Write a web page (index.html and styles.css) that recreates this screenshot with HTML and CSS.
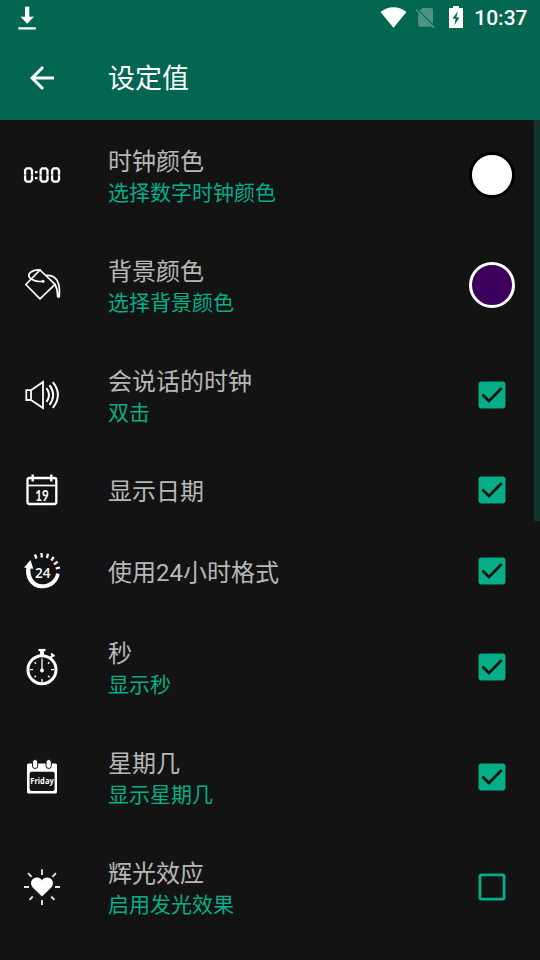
FILE: index.html
```html
<!DOCTYPE html>
<html lang="zh-CN">
<head>
<meta charset="utf-8">
<title>设定值</title>
<link rel="stylesheet" href="styles.css">
</head>
<body>
<header class="header">
  <div class="status">
    <svg class="download" width="20" height="24" viewBox="0 0 20 24"><path fill="#fff" d="M8 .8h4.300v10h4.700L10.200 17.800 3.500 10.800H8zM1.300 21.300h17.500v2.300H1.300z"/></svg>
    <div class="status-right">
      <svg width="27" height="36" viewBox="380 0 27 36"><path fill="#fff" d="M380.500 12Q386 7.200 393.500 7.200T406.500 12L393.500 27.700z"/></svg>
      <svg class="sim" width="20" height="36" viewBox="415 0 20 36"><path fill="#4f9383" d="M422.500 8h9q1.500 0 1.500 1.500V23.800L419.300 10.500zM418.200 12.700L432 26.700H420q-1.800 0-1.800-1.800z"/><path stroke="#4f9383" stroke-width="1.700" d="M416 9.500l18.300 18.300"/></svg>
      <svg class="battery" width="14" height="36" viewBox="449 0 14 36"><path fill="#fff" d="M449 8h4V6h6v2h4v20h-14z"/><path fill="#036650" d="M457.500 11.500l-5 7.300h3.200l-1.200 6.200 5-7.500h-3.200l1.500-6z"/></svg>
      <span class="time">10:37</span>
    </div>
  </div>
  <div class="toolbar">
    <svg class="back" width="36" height="36" viewBox="0 0 24 24"><path fill="#fff" d="M20 11H7.830l5.590-5.590L12 4l-8 8 8 8 1.410-1.410L7.830 13H20v-2z"/></svg>
    <h1>设定值</h1>
  </div>
</header>

<main class="list">
  <section class="row">
    <svg class="icon" viewBox="0 0 40 40"><g fill="none" stroke="#fff" stroke-width="2.300"><path id="zero" d="M4.600 13.400h3.900l1.500 1.800v9.600L8.500 26.600H4.600l-1.500-1.800v-9.600z"/><use href="#zero" x="15.500"/><use href="#zero" x="27"/></g><path stroke="#131313" stroke-width=".5" d="M1 20h38"/><path fill="#fff" d="M13 16h2.500v2.300H13zM13 22h2.500v2.300H13z"/></svg>
    <div class="text"><h2>时钟颜色</h2><p>选择数字时钟颜色</p></div>
    <div class="control"><span class="swatch white"></span></div>
  </section>
  <section class="row">
    <svg class="icon" viewBox="0 0 40 40"><g fill="none" stroke="#fff" stroke-width="1.700" stroke-linejoin="round" stroke-linecap="round"><path d="M18 5L3.800 19.500 18 33.800 33 19.300z"/><path d="M18 5C11 4.500 4.500 8.500 7.500 12.500 10 15.700 16 17 21 16.300"/><path d="M24.500 10.300C34 10 38.500 16.500 37.300 31.500q-.8 1.200-1.600 0Q36 25 33 19.300"/></g><circle cx="21" cy="16.300" r="1.500" fill="#fff"/></svg>
    <div class="text"><h2>背景颜色</h2><p>选择背景颜色</p></div>
    <div class="control"><span class="swatch purple"></span></div>
  </section>
  <section class="row">
    <svg class="icon" viewBox="0 0 40 40"><g fill="none" stroke="#fff" stroke-width="1.800"><path d="M4.300 15.200H9v9.800H4.300zM9 15.200L21 7v26L9 25"/><path stroke-width="2" d="M24.500 13.200q5 6.800 0 13.600M27.500 10.200q7.400 9.800 0 19.600M30.800 7.200q10.200 12.800 0 25.600"/></g></svg>
    <div class="text"><h2>会说话的时钟</h2><p>双击</p></div>
    <div class="control"><svg class="check" viewBox="0 0 28 28"><rect x=".5" y=".5" width="27" height="27" rx="3"/><path d="M4.400 13.500L11 20 23.800 7"/></svg></div>
  </section>
  <section class="row single">
    <svg class="icon" viewBox="0 0 40 40"><g fill="none" stroke="#fff"><rect x="5.500" y="8" width="28.800" height="26" rx="2" stroke-width="2.300"/><path stroke-width="1.700" d="M5 15.500h30"/><path stroke-width="2.400" d="M10.700 4.500v7M29.300 4.500v7"/></g><text class="date" x="20" y="30.500" textLength="13.500" lengthAdjust="spacingAndGlyphs">19</text></svg>
    <div class="text"><h2>显示日期</h2></div>
    <div class="control"><svg class="check" viewBox="0 0 28 28"><rect x=".5" y=".5" width="27" height="27" rx="3"/><path d="M4.400 13.500L11 20 23.800 7"/></svg></div>
  </section>
  <section class="row single">
    <svg class="icon" viewBox="0 0 40 40"><path fill="#fff" d="M8.500 9L2 16.600l2.400.3C2.500 28 10 37.300 20.500 37.300c9 0 16-6.300 17.200-14.300l-3.600-.8C33 28.500 27 33.300 20.500 33.300 13 33.300 7.500 26.500 8.500 17.400l2.800.3z"/><g stroke="#fff" stroke-width="2.300"><path d="M13 3.500l1.400 4M19.500 2l.3 4.500M26 2.700l-1 4.300M31.700 6l-2.400 3.500M35.700 10.700L32 13.200M38 16.500l-4.300 1"/></g><text class="hours" x="20.800" y="26.700" textLength="15.500" lengthAdjust="spacingAndGlyphs">24</text></svg>
    <div class="text"><h2>使用24小时格式</h2></div>
    <div class="control"><svg class="check" viewBox="0 0 28 28"><rect x=".5" y=".5" width="27" height="27" rx="3"/><path d="M4.400 13.500L11 20 23.800 7"/></svg></div>
  </section>
  <section class="row">
    <svg class="icon" viewBox="0 0 40 40"><g fill="none" stroke="#fff"><circle cx="20" cy="22.700" r="14" stroke-width="3"/><path stroke-width="2.200" d="M16.500 3h7"/><path stroke-width="4" d="M20 3v5"/><path stroke-width="2" d="M28.500 11l2.500-3M29 6.500l3.500 2.700"/><path stroke-width="1.300" d="M20 11.500v12"/><path stroke-width="1.300" d="M8 22.700h3M29 22.700h3M20 32v3M12.500 15.200l1.500 1.500M27.500 15.200L26 16.700M12.500 30.200l1.500-1.500M27.500 30.200L26 28.700"/></g><circle cx="20" cy="23.500" r="1.900" fill="#fff"/></svg>
    <div class="text"><h2>秒</h2><p>显示秒</p></div>
    <div class="control"><svg class="check" viewBox="0 0 28 28"><rect x=".5" y=".5" width="27" height="27" rx="3"/><path d="M4.400 13.500L11 20 23.800 7"/></svg></div>
  </section>
  <section class="row">
    <svg class="icon" viewBox="0 0 40 40"><rect x="5" y="6.500" width="30" height="30" rx="1.500" fill="#fff"/><rect x="7.600" y="14.700" width="25" height="19.300" rx="2" fill="#131313"/><g fill="#fff" stroke="#131313" stroke-width="1"><rect x="10.500" y="2.500" width="5.200" height="9" rx="2.600"/><rect x="24.100" y="2.500" width="5.200" height="9" rx="2.600"/></g><text class="day" x="20" y="27.300" textLength="23.500" lengthAdjust="spacingAndGlyphs">Friday</text></svg>
    <div class="text"><h2>星期几</h2><p>显示星期几</p></div>
    <div class="control"><svg class="check" viewBox="0 0 28 28"><rect x=".5" y=".5" width="27" height="27" rx="3"/><path d="M4.400 13.500L11 20 23.800 7"/></svg></div>
  </section>
  <section class="row">
    <svg class="icon" viewBox="0 0 40 40"><path fill="#fff" d="M20 29.500L10.700 20.500C6.500 15 11 10.400 15 10.600 17.500 10.800 19.300 12 20 13.500 20.700 12 22.500 10.800 25 10.600 29 10.400 33.500 15 29.300 20.500z"/><path stroke="#e4e4e4" stroke-width="1.900" d="M20 2.300V8M20 33v5M2 20h5M33 20h5M6 6.200l3.600 3.600M34 6.200l-3.600 3.600M7.500 32.800l3.300-3.300M32.500 32.800L29.200 29.500"/></svg>
    <div class="text"><h2>辉光效应</h2><p>启用发光效果</p></div>
    <div class="control"><svg class="check off" viewBox="0 0 28 28"><rect x="1.900" y="1.900" width="24.200" height="24.200" rx="1.600"/></svg></div>
  </section>
  <div class="scrollbar"></div>
</main>
</body>
</html>
```
FILE: styles.css
```css
* { box-sizing: border-box; margin: 0; padding: 0; }
body {
  width: 540px;
  height: 960px;
  overflow: hidden;
  background: #131313;
  color: #b8b8b8;
  font-family: Roboto, "Noto Sans CJK SC", sans-serif;
}
svg { display: block; flex: none; }
.header { height: 120px; background: #036650; color: #fff; }
.status {
  height: 36px;
  display: flex;
  justify-content: space-between;
  align-items: center;
  padding: 0 12.500px 0 17px;
}
.status-right { display: flex; align-items: center; }
.sim { margin-left: 8px; }
.battery { margin-left: 14px; }
.time { margin-left: 11.500px; font-size: 21px; font-weight: 500; line-height: 36px; }
.toolbar { height: 84px; display: flex; align-items: center; padding-left: 24px; }
.toolbar h1 { margin-left: 48px; padding-top: 2px; font-size: 27px; font-weight: 400; line-height: 40px; }
.list { position: relative; height: 840px; }
.row { height: 110px; display: flex; align-items: center; padding-left: 22px; }
.row.single { height: 81px; padding-bottom: 1px; }
.icon { width: 40px; height: 40px; }
.text { flex: 1; margin-left: 46px; padding-top: 4px; }
.text h2 { font-size: 24px; font-weight: 400; line-height: 32px; }
.text p { font-size: 21px; line-height: 31px; color: #04ae88; }
.control { width: 96px; display: flex; justify-content: center; }
.swatch { width: 46px; height: 46px; border-radius: 50%; border: 3px solid; }
.white { background: #fff; border-color: #000; }
.purple { background: #3c005c; border-color: #fff; }
.check { width: 28px; height: 28px; }
.check rect { fill: #04ae88; }
.check path { fill: none; stroke: #131313; stroke-width: 2.700; }
.check.off rect { fill: none; stroke: #04ae88; stroke-width: 2.800; }
.icon text { fill: #fff; text-anchor: middle; font-weight: 700; }
.icon .date { font-family: Lato, sans-serif; font-size: 16px; }
.icon .hours { font-family: "Open Sans", sans-serif; font-size: 13.500px; font-weight: 600; }
.icon .day { font-family: "Open Sans", sans-serif; font-size: 8px; }
.scrollbar { position: absolute; top: 0; right: 0; width: 6px; height: 401px; background: #10352c; }
```
